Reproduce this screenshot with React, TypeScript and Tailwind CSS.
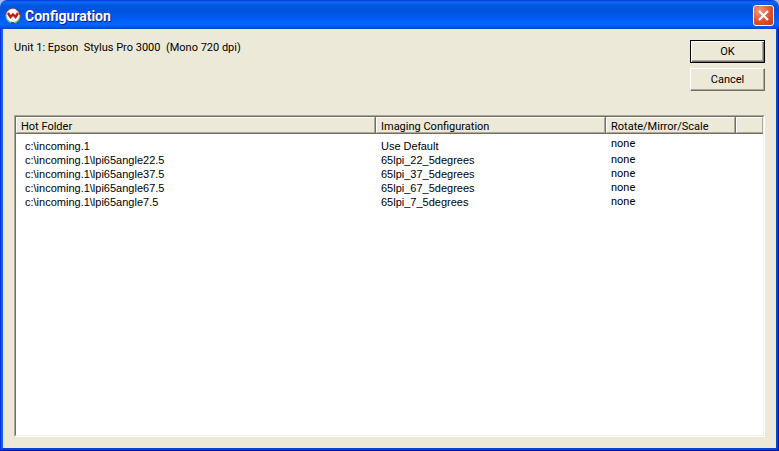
const folders = [
  { path: "c:\\incoming.1", config: "Use Default", transform: "none" },
  { path: "c:\\incoming.1\\lpi65angle22.5", config: "65lpi_22_5degrees", transform: "none" },
  { path: "c:\\incoming.1\\lpi65angle37.5", config: "65lpi_37_5degrees", transform: "none" },
  { path: "c:\\incoming.1\\lpi65angle67.5", config: "65lpi_67_5degrees", transform: "none" },
  { path: "c:\\incoming.1\\lpi65angle7.5", config: "65lpi_7_5degrees", transform: "none" },
];

const headCell = "border-b border-[#716f64] p-0 font-normal";
const headInner =
  "block h-4 overflow-hidden border border-l-white border-t-white border-r-[#aca899] border-b-[#aca899] pl-1 text-left leading-[18px] whitespace-nowrap";

const AppIcon = () => (
  <svg className="h-4 w-4 shrink-0" viewBox="0 0 16 16" aria-hidden="true">
    <circle cx="8" cy="8" r="8" fill="#4a4672" />
    <path d="M.8 6A7.4 7.4 0 0 1 11 1.2L8 8Z" fill="#e3a9cb" />
    <path d="M.8 6 8 8 6 15.2A7.4 7.4 0 0 1 .8 6Z" fill="#4fc3c8" />
    <path d="M15.2 7 8 8 9 15.3A7.4 7.4 0 0 0 15.2 7Z" fill="#7cc98a" />
    <circle cx="8" cy="7.5" r="6.4" fill="#fff" />
    <path d="m3 5 2.5 4L8 6.5 10.5 9 13 5" fill="none" stroke="#c9160c" strokeWidth="2.4" />
  </svg>
);

const TitleBar = () => (
  <div className="flex h-[29px] items-center rounded-t-[7px] bg-[linear-gradient(180deg,#0831d9_0px,#0a6cf5_2px,#0058e0_5px,#0053dd_10px,#005af0_17px,#0066ff_24px,#0058e6_27px,#0043c8_29px)] pt-[2px] pr-[5px] pl-[5px]">
    <AppIcon />
    <h1 className="ml-1 flex-1 text-[14px] leading-4 font-bold text-white [text-shadow:1px_1px_0_#0a1883]">
      Configuration
    </h1>
    <button
      aria-label="Close"
      className="flex h-[21px] w-[21px] items-center justify-center rounded-[3px] border border-white bg-[radial-gradient(circle_at_30%_25%,#f09a80,#e0522c_55%,#c03a12)]"
    >
      <svg className="h-[13px] w-[13px]" viewBox="0 0 13 13" aria-hidden="true">
        <path d="m2 2 9 9M11 2l-9 9" stroke="#fff" strokeWidth="2.2" />
      </svg>
    </button>
  </div>
);

const FolderTable = () => (
  <div className="mt-[22px] flex flex-1 border border-t-[#aca899] border-l-[#aca899] border-r-white border-b-white">
    <div className="flex-1 border border-t-[#716f64] border-l-[#716f64] border-r-[#f1efe2] border-b-[#f1efe2] bg-white">
      <table className="w-full table-fixed border-separate border-spacing-0">
        <colgroup>
          <col className="w-[360px]" />
          <col className="w-[230px]" />
          <col className="w-[130px]" />
          <col />
        </colgroup>
        <thead className="bg-[#ece9d8]">
          <tr>
            <th className={`${headCell} border-r`}><span className={headInner}>Hot Folder</span></th>
            <th className={`${headCell} border-r`}><span className={headInner}>Imaging Configuration</span></th>
            <th className={`${headCell} border-r`}><span className={headInner}>Rotate/Mirror/Scale</span></th>
            <td className={headCell}><span className={headInner} /></td>
          </tr>
        </thead>
        <tbody className="leading-[14px] [&>tr:first-child>td]:h-[19px] [&>tr:first-child>td]:pt-[3px]">
          {folders.map((folder) => (
            <tr key={folder.path}>
              <td className="h-[14px] p-0 pl-[9px] align-bottom font-['Liberation_Sans',sans-serif]">{folder.path}</td>
              <td className="h-[14px] p-0 pl-[5px] align-bottom font-['Liberation_Sans',sans-serif]">{folder.config}</td>
              <td className="h-[14px] p-0 pl-[5px] align-top">{folder.transform}</td>
              <td className="p-0" />
            </tr>
          ))}
        </tbody>
      </table>
    </div>
  </div>
);

export default function App() {
  return (
    <div className="flex min-h-screen flex-col bg-[#a9bdea] font-['Roboto',sans-serif] text-[11px] text-black">
      <TitleBar />
      <div className="flex flex-1 flex-col border-r border-b border-l border-l-[#0831d9] border-r-[#00138c] border-b-[#00138c]">
        <main className="flex flex-1 flex-col border-x-2 border-b-2 border-l-[#0f61ee] border-r-[#0441d8] border-b-[#0441d8] bg-[#ece9d8] p-[11px]">
          <div className="flex items-start justify-between pb-[2px]">
            <p className="leading-4 whitespace-pre">Unit 1: Epson  Stylus Pro 3000  (Mono 720 dpi)</p>
            <div className="flex w-[75px] flex-col gap-[5px]">
              <button className="h-[23px] border border-black leading-4 shadow-[inset_1px_1px_0_#fff,inset_-1px_-1px_0_#716f64,inset_-2px_-2px_0_#aca899]">
                OK
              </button>
              <button className="h-[23px] border border-t-white border-l-white border-r-[#716f64] border-b-[#716f64] leading-4 shadow-[inset_-1px_-1px_0_#aca899]">
                Cancel
              </button>
            </div>
          </div>
          <FolderTable />
        </main>
      </div>
    </div>
  );
}
